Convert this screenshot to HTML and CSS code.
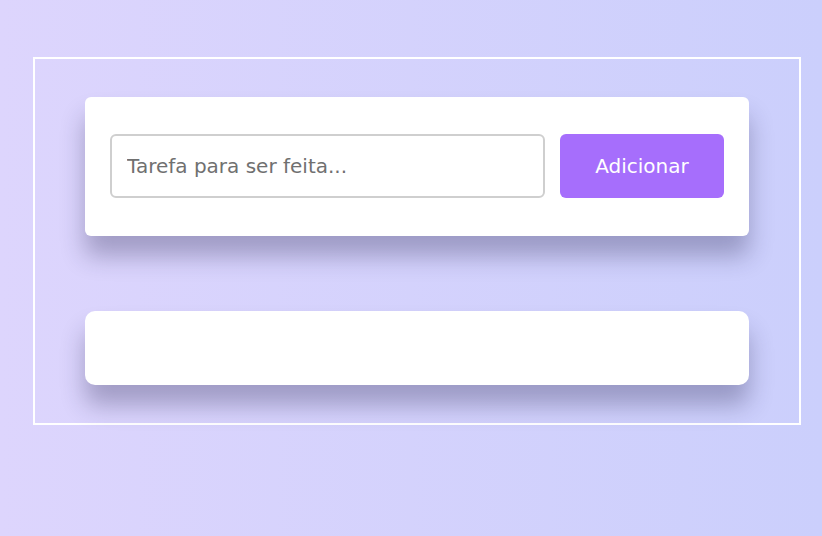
FILE: index.html
```html
<!DOCTYPE html>
<html lang="pt">
<head>
<meta charset="utf-8">
<title>Tarefas</title>
<link rel="stylesheet" href="styles.css">
</head>
<body>
  <main class="frame">
    <form class="card card-form" onsubmit="return false">
      <input class="task-input" type="text" placeholder="Tarefa para ser feita...">
      <button class="add-btn" type="submit">Adicionar</button>
    </form>
    <ul class="card card-list"></ul>
  </main>
</body>
</html>
```

FILE: styles.css
```css
* { box-sizing: border-box; }
html, body { margin: 0; height: 100%; }
body {
  background: linear-gradient(to right, #ddd5fd, #cbcffc);
  font-family: "DejaVu Sans", "Open Sans", sans-serif;
  padding: 57px 0 0 33px;
}
.frame {
  width: 768px;
  border: 2px solid #ffffff;
  padding: 38px 50px;
  display: flex;
  flex-direction: column;
  gap: 75px;
}
.card {
  background: #ffffff;
  box-shadow: 0 20px 25px rgba(30, 25, 70, 0.3);
  margin: 0;
}
.card-form {
  border-radius: 6px;
  padding: 37px 25px 38px;
  display: flex;
  gap: 15px;
}
.task-input {
  flex: 1;
  height: 64px;
  border: 2px solid #cfcfcf;
  border-radius: 6px;
  padding: 0 15px;
  font-family: inherit;
  font-size: 20px;
  color: #555;
  outline: none;
}
.task-input::placeholder { color: #707070; }
.add-btn {
  width: 164px;
  height: 64px;
  border: none;
  border-radius: 6px;
  background: #a66efc;
  color: #ffffff;
  font-family: inherit;
  font-size: 20px;
}
.card-list {
  list-style: none;
  height: 74px;
  border-radius: 10px;
  padding: 0;
}
```
